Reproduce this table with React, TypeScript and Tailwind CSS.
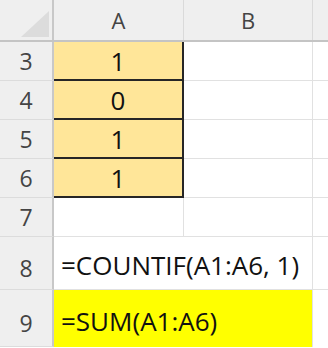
import React from "react";

const font = { fontFamily: '"Open Sans", "Noto Sans", "Liberation Sans", sans-serif' };

function RowHead({ n, h, extra = "items-center" }: { n: string; h: string; extra?: string }) {
  return (
    <div
      className={`w-[54px] shrink-0 ${h} bg-[#efefef] border-r-2 border-r-[#c8c8c8] border-b border-b-[#dcdcdc] flex justify-center ${extra} text-[23px] leading-none text-[#444]`}
    >
      {n}
    </div>
  );
}

function ValRow({ n, v }: { n: string; v: string }) {
  return (
    <div className="flex h-[39px]">
      <RowHead n={n} h="h-[39px]" />
      <div className="w-[130px] shrink-0 h-[39px] bg-[#ffe699] border-r-2 border-b-2 border-[#262626] flex items-center justify-center text-[26px] leading-none text-[#111]">
        {v}
      </div>
      <div className="w-[129px] shrink-0 h-[39px] border-r border-b border-[#e1e1e1]" />
      <div className="flex-1 h-[39px] border-b border-[#e1e1e1]" />
    </div>
  );
}

export default function App() {
  return (
    <div className="w-[328px] h-[348px] overflow-hidden bg-white" style={font}>
      {/* header */}
      <div className="flex h-[42px] bg-[#efefef] border-b-2 border-b-[#c4c4c4]">
        <div className="w-[54px] shrink-0 h-full border-r-2 border-r-[#c8c8c8] relative">
          <svg width="54" height="40" className="absolute left-0 top-0">
            <polygon points="21,37 49,37 49,11" fill="#dcdcdc" />
          </svg>
        </div>
        <div className="w-[130px] shrink-0 h-full border-r border-r-[#dadada] flex items-center justify-center text-[22px] leading-none text-[#444]">
          A
        </div>
        <div className="w-[129px] shrink-0 h-full border-r border-r-[#dadada] flex items-center justify-center text-[22px] leading-none text-[#444]">
          B
        </div>
        <div className="flex-1 h-full" />
      </div>
      <ValRow n="3" v="1" />
      <ValRow n="4" v="0" />
      <ValRow n="5" v="1" />
      <ValRow n="6" v="1" />
      {/* row 7 */}
      <div className="flex h-[39px]">
        <RowHead n="7" h="h-[39px]" />
        <div className="w-[130px] shrink-0 h-[39px] border-r border-b border-[#e1e1e1]" />
        <div className="w-[129px] shrink-0 h-[39px] border-r border-b border-[#e1e1e1]" />
        <div className="flex-1 h-[39px] border-b border-[#e1e1e1]" />
      </div>
      {/* row 8 */}
      <div className="flex h-[53px]">
        <RowHead n="8" h="h-[53px]" extra="items-end pb-[9px]" />
        <div className="w-[259px] shrink-0 h-[53px] border-r border-b border-[#e1e1e1] flex items-end pb-[11px] pl-[7px] text-[26px] leading-none text-[#111] whitespace-nowrap">
          =COUNTIF(A1:A6, 1)
        </div>
        <div className="flex-1 h-[53px] border-b border-[#e1e1e1]" />
      </div>
      {/* row 9 */}
      <div className="flex h-[57px]">
        <RowHead n="9" h="h-[57px]" extra="items-end pb-[11px]" />
        <div className="w-[259px] shrink-0 h-[57px] bg-[#ffff00] border-r border-[#e1e1e1] flex items-end pb-[13px] pl-[7px] text-[26px] leading-none text-[#111] whitespace-nowrap">
          =SUM(A1:A6)
        </div>
        <div className="flex-1 h-[57px]" />
      </div>
    </div>
  );
}
